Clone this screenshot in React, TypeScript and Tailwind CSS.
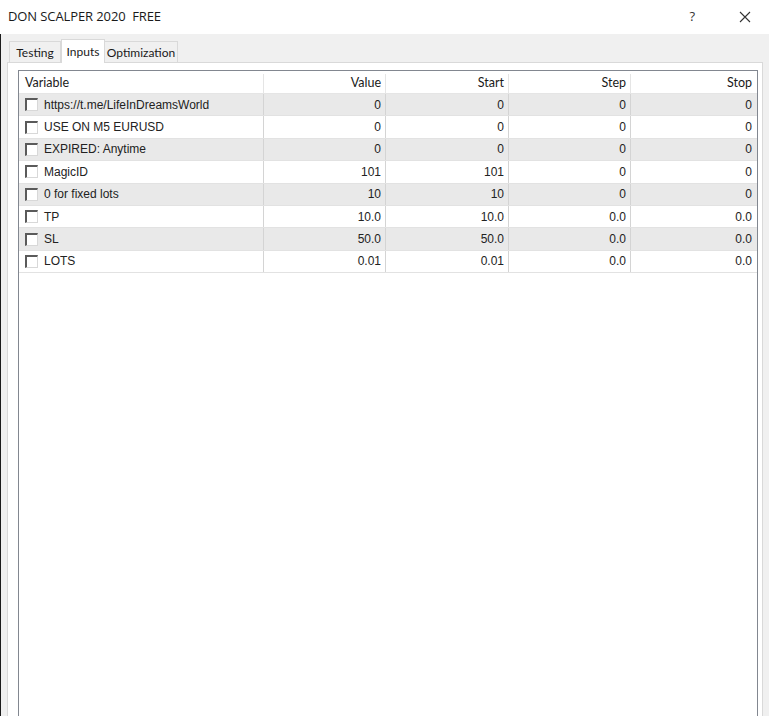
import React from 'react'

type Row = {
  name: string;
  value: string;
  start: string;
  step: string;
  stop: string;
};

const rows: Row[] = [
  { name: "https://t.me/LifeInDreamsWorld", value: "0", start: "0", step: "0", stop: "0" },
  { name: "USE ON M5 EURUSD", value: "0", start: "0", step: "0", stop: "0" },
  { name: "EXPIRED: Anytime", value: "0", start: "0", step: "0", stop: "0" },
  { name: "MagicID", value: "101", start: "101", step: "0", stop: "0" },
  { name: "0 for fixed lots", value: "10", start: "10", step: "0", stop: "0" },
  { name: "TP", value: "10.0", start: "10.0", step: "0.0", stop: "0.0" },
  { name: "SL", value: "50.0", start: "50.0", step: "0.0", stop: "0.0" },
  { name: "LOTS", value: "0.01", start: "0.01", step: "0.0", stop: "0.0" },
];

const ui = "font-['Lato','Open_Sans',sans-serif]";
const cell = "font-['Liberation_Sans',Arial,sans-serif]";

const CheckBox = () => (
  <span className="inline-block w-[13px] h-[13px] bg-white border-t-2 border-l-2 border-t-[#5a5a5a] border-l-[#5a5a5a] border-r border-b border-r-[#d8d8d8] border-b-[#d8d8d8] shrink-0" />
);

const App = () => {
  return (
    <div className="w-[769px] h-[716px] overflow-hidden bg-[#f0f0f0] flex flex-col text-[#1a1a1a]">
      <div className="h-[34px] bg-white flex items-center pl-[8px] shrink-0 font-['Open_Sans',sans-serif]">
        <span className="text-[13px] tracking-[-0.1px]">DON SCALPER 2020&nbsp; FREE</span>
        <span className="ml-auto mr-[44px] text-[13px] text-[#333]">?</span>
        <svg width="12" height="12" viewBox="0 0 12 12" className="mr-[18px]">
          <path d="M1 1 L11 11 M11 1 L1 11" stroke="#333" strokeWidth="1.1" />
        </svg>
      </div>
      <div className="flex-1 flex flex-col border-l border-l-[#1c1c1c]">
        <div className={`h-[28px] flex items-end pl-[8px] text-[12px] ${ui}`}>
          <div className="h-[21px] w-[52px] border border-[#d9d9d9] border-b-0 flex items-center justify-center pt-[1px] bg-[#f0f0f0]">
            Testing
          </div>
          <div className="h-[24px] w-[44px] border border-[#d9d9d9] border-b-0 bg-white flex items-start pt-[3px] justify-center -mb-px relative z-10">
            Inputs
          </div>
          <div className="h-[21px] w-[73px] border border-[#d9d9d9] border-b-0 border-l-0 flex items-center justify-center pt-[1px] bg-[#f0f0f0]">
            Optimization
          </div>
        </div>
        <div className="ml-[6px] w-[756px] flex-1 bg-white border border-[#d9d9d9] pt-[7px] pl-[10px]">
          <div className="w-[740px] h-[700px] border border-[#828790] bg-white">
            <div className={`flex h-[23px] border-b border-[#e5e5e5] text-[12.5px] pt-[3px] ${ui}`}>
              <div className="w-[245px] pl-[6px] flex items-center border-r border-[#e5e5e5]">Variable</div>
              <div className="w-[122px] pr-[4px] flex items-center justify-end border-r border-[#e5e5e5]">Value</div>
              <div className="w-[123px] pr-[4px] flex items-center justify-end border-r border-[#e5e5e5]">Start</div>
              <div className="w-[122px] pr-[4px] flex items-center justify-end border-r border-[#e5e5e5]">Step</div>
              <div className="flex-1 pr-[5px] flex items-center justify-end">Stop</div>
            </div>
            {rows.map((r, i) => (
              <div
                key={i}
                className={`flex h-[22.4px] border-b border-[#e2e2e2] text-[12px] text-[#222] ${cell} ${
                  i % 2 === 0 ? "bg-[#e9e9e9]" : "bg-white"
                }`}
              >
                <div className="w-[245px] pl-[6px] flex items-center gap-[6px] border-r border-[#d4d4d4]">
                  <CheckBox />
                  <span>{r.name}</span>
                </div>
                <div className="w-[122px] pr-[4px] flex items-center justify-end border-r border-[#d4d4d4]">{r.value}</div>
                <div className="w-[123px] pr-[4px] flex items-center justify-end border-r border-[#d4d4d4]">{r.start}</div>
                <div className="w-[122px] pr-[4px] flex items-center justify-end border-r border-[#d4d4d4]">{r.step}</div>
                <div className="flex-1 pr-[5px] flex items-center justify-end">{r.stop}</div>
              </div>
            ))}
          </div>
        </div>
      </div>
    </div>
  );
};

export default App;
